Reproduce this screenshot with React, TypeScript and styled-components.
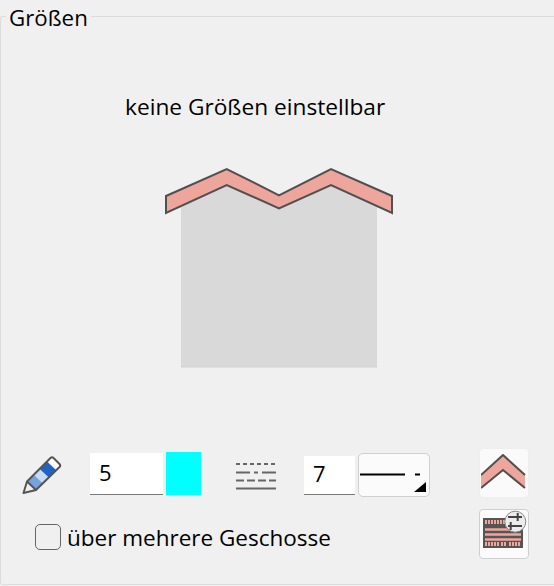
import React from 'react';
import styled, { createGlobalStyle } from 'styled-components';

const Global = createGlobalStyle`
  html, body {
    margin: 0;
    padding: 0;
    background: #f0f0f0;
  }
  * {
    box-sizing: border-box;
  }
`;

const Panel = styled.div`
  width: 554px;
  height: 586px;
  background: #f0f0f0;
  padding-top: 16px;
  font-family: 'Open Sans', 'Noto Sans', sans-serif;
  color: #000;
  overflow: hidden;
`;

const Group = styled.div`
  position: relative;
  width: 554px;
  height: 569px;
  border: 1px solid #dcdcdc;
  border-right: none;
  border-radius: 3px 0 0 3px;
  display: flex;
  flex-direction: column;
`;

const Title = styled.span`
  position: absolute;
  top: -14px;
  left: 5px;
  padding: 0 3px;
  background: #f0f0f0;
  font-size: 22.3px;
  line-height: 30px;
  height: 30px;
`;

const Hint = styled.div`
  margin-top: 76px;
  margin-left: 124px;
  font-size: 22.7px;
  line-height: 28px;
  height: 28px;
  white-space: nowrap;
`;

const Preview = styled.svg`
  display: block;
  margin-top: 46px;
  margin-left: 163px;
  width: 230px;
  height: 202px;
`;

const Controls = styled.div`
  display: flex;
  margin-top: 83px;
  padding-left: 20px;
`;

const Left = styled.div`
  display: flex;
  flex-direction: column;
  width: 459px;
`;

const Row = styled.div`
  display: flex;
  align-items: flex-end;
  height: 43px;
`;

const PenIcon = styled.svg`
  align-self: flex-start;
  width: 42px;
  height: 42px;
  margin-top: 3px;
  flex: none;
`;

const NumberField = styled.div<{ $w: number; $h: number; $ml: number }>`
  width: ${(p) => p.$w}px;
  height: ${(p) => p.$h}px;
  margin-left: ${(p) => p.$ml}px;
  background: #fff;
  border-bottom: 1px solid #7a7a7a;
  font-size: 22px;
  line-height: ${(p) => p.$h - 4}px;
  padding-left: 9px;
  flex: none;
`;

const Swatch = styled.div`
  width: 35px;
  height: 43px;
  margin-left: 3px;
  background: #00ffff;
  flex: none;
`;

const LineIcon = styled.svg`
  align-self: flex-start;
  width: 42px;
  height: 32px;
  margin-left: 34px;
  margin-top: 8px;
  flex: none;
`;

const LineSelect = styled.div`
  align-self: flex-start;
  width: 72px;
  height: 44px;
  margin-left: 3px;
  margin-top: 1px;
  background: #fbfbfb;
  border: 1px solid #d0d0d0;
  border-radius: 5px;
  flex: none;
`;

const LineGlyph = styled.svg`
  display: block;
  width: 70px;
  height: 42px;
`;

const CheckRow = styled.label`
  display: flex;
  align-items: center;
  margin-top: 26px;
  margin-left: 14px;
  font-size: 22.5px;
  line-height: 30px;
  white-space: nowrap;
`;

const CheckText = styled.span`
  padding-top: 2px;
`;

const Box = styled.span`
  width: 26px;
  height: 26px;
  border: 1.5px solid #666;
  border-radius: 5px;
  background: #f0f0f0;
  margin-right: 6px;
  flex: none;
`;

const Right = styled.div`
  display: flex;
  flex-direction: column;
  gap: 11px;
  margin-top: -4px;
  margin-left: -1px;
`;

const IconButton = styled.button<{ $raised?: boolean }>`
  width: 50px;
  height: 50px;
  padding: 0;
  background: ${(p) => (p.$raised ? '#fbfbfb' : '#fafafa')};
  border: 1px solid ${(p) => (p.$raised ? '#cfcfcf' : '#eeeeee')};
  border-radius: 4px;
  display: flex;
  align-items: center;
  justify-content: center;
`;

export default function App() {
  return (
    <Panel>
      <Global />
      <Group>
        <Title>Größen</Title>
        <Hint>keine Größen einstellbar</Hint>
        <Preview viewBox="0 0 230 202">
          <path d="M17 40 L62.7 18 L115 41.3 L167 18 L213 40 V200 H17 Z" fill="#d9d9d9" />
          <path d="M17 200 H213" stroke="#cfcfcf" strokeWidth="1" />
          <path
            d="M2 29 L62.7 2 L115 28.3 L167 2 L228 29 V46 L167 18 L115 41.3 L62.7 18 L2 46 Z"
            fill="#eea59b"
            stroke="#505050"
            strokeWidth="2"
          />
        </Preview>
        <Controls>
          <Left>
            <Row>
              <PenIcon viewBox="0 0 42 42">
                <path d="M26 6.5 L29.5 3 Q31 1.5 32.5 3 L38.5 9 Q40 10.5 38.5 12 L35 15 Z" fill="#fff" />
                <path d="M18.5 14 L26 6.5 L35 15 L27.5 22.5 Z" fill="#1f63c7" />
                <path d="M12.75 19.75 L18.5 14 L27.5 22.5 L21.75 28.25 Z" fill="#c9dbf2" />
                <path d="M6 26.5 L12.75 19.75 L21.75 28.25 L15 35 Z" fill="#77a2e0" />
                <path
                  d="M2.5 38 L6 26.5 L29.5 3 Q31 1.5 32.5 3 L38.5 9 Q40 10.5 38.5 12 L15 35 Z M6 26.5 L15 35"
                  fill="none"
                  stroke="#555"
                  strokeWidth="2"
                  strokeLinejoin="round"
                />
              </PenIcon>
              <NumberField $w={73} $h={42} $ml={27}>5</NumberField>
              <Swatch />
              <LineIcon viewBox="0 0 42 32">
                <path d="M1 4 H41" stroke="#666" strokeWidth="2" strokeDasharray="4 3" />
                <path d="M1 12.5 H15 M19 12.5 H23 M27 12.5 H41" stroke="#666" strokeWidth="2" />
                <path d="M1 20.5 H41" stroke="#666" strokeWidth="2" strokeDasharray="8 3" />
                <path d="M1 28.5 H41" stroke="#666" strokeWidth="2" />
              </LineIcon>
              <NumberField $w={51} $h={39} $ml={27}>7</NumberField>
              <LineSelect>
                <LineGlyph viewBox="0 0 70 42">
                  <path d="M1 20.5 H46" stroke="#000" strokeWidth="2" />
                  <path d="M56 20.5 H61" stroke="#000" strokeWidth="2" />
                  <path d="M55 38 L67 38 L67 28 Z" fill="#000" />
                </LineGlyph>
              </LineSelect>
            </Row>
            <CheckRow>
              <Box />
              <CheckText>über mehrere Geschosse</CheckText>
            </CheckRow>
          </Left>
          <Right>
            <IconButton>
              <svg width="46" height="38" viewBox="0 0 46 38">
                <path d="M0 21 L22 1 L44 21 V34 L22 16 L0 34 Z" fill="#eea59b" />
                <path d="M0 21 L22 1 L44 21 M44 34 L22 16 L0 34" fill="none" stroke="#505050" strokeWidth="2" />
              </svg>
            </IconButton>
            <IconButton $raised>
              <svg width="48" height="48" viewBox="0 0 48 48">
                <rect x="3" y="8" width="40" height="30" fill="#555" />
                <path
                  d="M6 10 V14 M9 10 V14 M12 10 V14 M15 10 V14 M18 10 V14 M21 10 V14 M24 10 V14 M27 10 V14 M6 32 V36 M9 32 V36 M12 32 V36 M15 32 V36 M18 32 V36 M22 32 V36 M25 32 V36 M30 32 V36 M33 32 V36 M36 32 V36 M39 32 V36"
                  stroke="#eea59b"
                  strokeWidth="2"
                />
                <path d="M5 19.5 H41 M5 24.5 H41 M5 29.5 H41" stroke="#eea59b" strokeWidth="2.5" />
                <circle cx="35.3" cy="11.7" r="10.5" fill="#ececec" stroke="#888" strokeWidth="1" />
                <path d="M28 7 H42 M28 16 H42" stroke="#444" strokeWidth="1.8" />
                <path d="M37.7 3 V11 M30.7 12 V20" stroke="#444" strokeWidth="2" />
              </svg>
            </IconButton>
          </Right>
        </Controls>
      </Group>
    </Panel>
  );
}
